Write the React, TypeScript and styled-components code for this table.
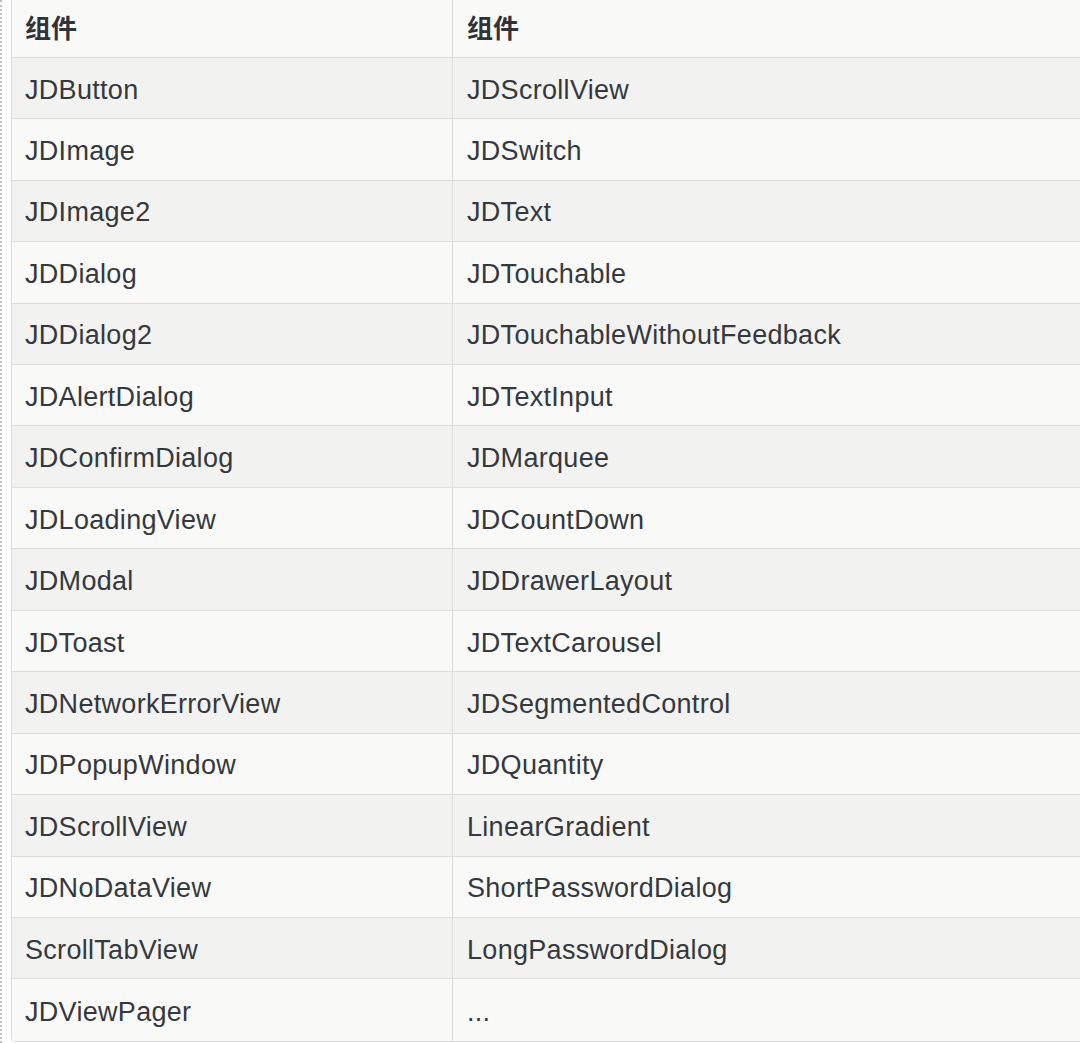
import React from "react";
import styled, { createGlobalStyle } from "styled-components";

const Global = createGlobalStyle`
  html, body { margin: 0; padding: 0; background: #ffffff; overflow: hidden; }
  body { font-family: "Liberation Sans", Arial, "Noto Sans CJK SC", sans-serif; }
`;

const Page = styled.div`
  width: 1080px;
  height: 1043px;
  overflow: hidden;
  position: relative;
  box-sizing: border-box;
  border-left: 2px dotted #bdbdbd;
  padding-left: 9px;
  background: #ffffff;
`;

const Table = styled.div`
  width: 1100px;
  margin-top: -3.6px;
  border: 1px solid #dcdcdc;
  border-top: none;
  border-radius: 0 0 5px 5px;
  overflow: hidden;
  box-sizing: border-box;
`;

const Row = styled.div<{ $shade: "head" | "odd" | "even" }>`
  display: grid;
  grid-template-columns: 441px 1fr;
  height: 61.44px;
  box-sizing: border-box;
  border-bottom: 1px solid #dedede;
  background: ${(p) => (p.$shade === "odd" ? "#f2f2f1" : "#f9f9f8")};
  &:last-child { border-bottom: none; }
`;

const Cell = styled.div<{ $head?: boolean; $first?: boolean }>`
  display: flex;
  align-items: center;
  box-sizing: border-box;
  padding: ${(p) => (p.$head ? "0" : "4px")} 0 0 ${(p) => (p.$first ? "13px" : "14px")};
  border-right: ${(p) => (p.$first ? "1px solid #dcdcdc" : "none")};
  font-size: ${(p) => (p.$head ? "26px" : "27px")};
  font-weight: ${(p) => (p.$head ? 700 : 400)};
  font-family: ${(p) =>
    p.$head
      ? '"Noto Sans CJK SC", "Liberation Sans", sans-serif'
      : '"Liberation Sans", Arial, "Noto Sans CJK SC", sans-serif'};
  color: ${(p) => (p.$head ? "#2f3338" : "#35393e")};
  white-space: nowrap;
  letter-spacing: ${(p) => (p.$head ? "0" : "0.3px")};
`;

const rows: [string, string][] = [
  ["JDButton", "JDScrollView"],
  ["JDImage", "JDSwitch"],
  ["JDImage2", "JDText"],
  ["JDDialog", "JDTouchable"],
  ["JDDialog2", "JDTouchableWithoutFeedback"],
  ["JDAlertDialog", "JDTextInput"],
  ["JDConfirmDialog", "JDMarquee"],
  ["JDLoadingView", "JDCountDown"],
  ["JDModal", "JDDrawerLayout"],
  ["JDToast", "JDTextCarousel"],
  ["JDNetworkErrorView", "JDSegmentedControl"],
  ["JDPopupWindow", "JDQuantity"],
  ["JDScrollView", "LinearGradient"],
  ["JDNoDataView", "ShortPasswordDialog"],
  ["ScrollTabView", "LongPasswordDialog"],
  ["JDViewPager", "..."],
];

export default function App() {
  return (
    <>
      <Global />
      <Page>
        <Table>
          <Row $shade="head">
            <Cell $head $first>组件</Cell>
            <Cell $head>组件</Cell>
          </Row>
          {rows.map(([a, b], i) => (
            <Row key={i} $shade={i % 2 === 0 ? "odd" : "even"}>
              <Cell $first>{a}</Cell>
              <Cell>{b}</Cell>
            </Row>
          ))}
        </Table>
      </Page>
    </>
  );
}
